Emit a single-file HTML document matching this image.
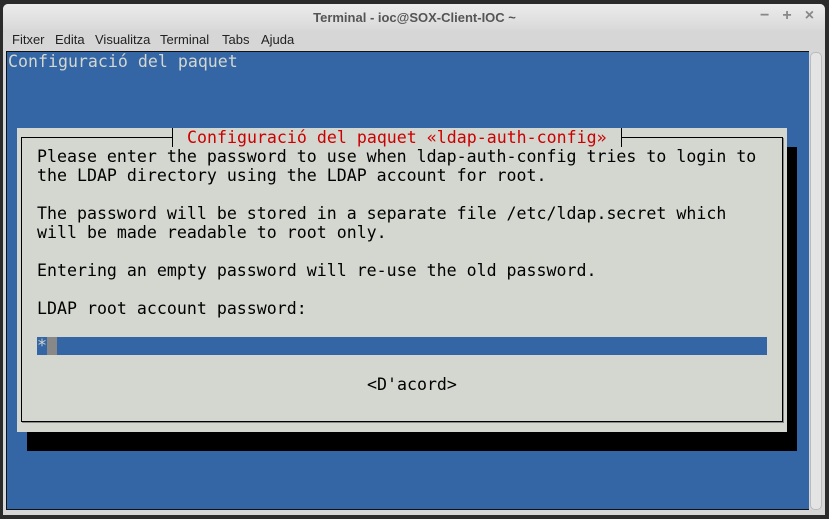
<!DOCTYPE html>
<html><head><meta charset="utf-8"><style>
body{margin:0;width:829px;height:519px;background:#2b2b2b;position:relative;overflow:hidden;font-family:"Liberation Sans",sans-serif}
.a{position:absolute}
.m{position:absolute;top:32px;font-size:13px;color:#222}
.t{position:absolute;font-family:"DejaVu Sans Mono","Liberation Mono",monospace;font-size:16.6px;line-height:19px;white-space:pre;color:#000}
</style></head><body>
<div class="a" style="left:3px;top:4px;width:822px;height:511px;background:#d6d6d6;border-radius:5px 5px 0 0"></div>
<div class="a" style="left:3px;top:4px;width:822px;height:26px;background:linear-gradient(#ececec,#d9d9d9);border-radius:5px 5px 0 0"></div>
<div class="a" style="left:0;top:10px;width:829px;text-align:center;font-size:13px;font-weight:bold;color:#555">Terminal - ioc@SOX-Client-IOC ~</div>
<div class="a" style="left:760px;top:7px;font-size:16px;color:#888;font-weight:bold;letter-spacing:13px">−+×</div>
<div class="m" style="left:12px">Fitxer</div>
<div class="m" style="left:55px">Edita</div>
<div class="m" style="left:95px">Visualitza</div>
<div class="m" style="left:160px">Terminal</div>
<div class="m" style="left:222px">Tabs</div>
<div class="m" style="left:261px">Ajuda</div>
<div class="a" style="left:6px;top:51px;width:802px;height:457px;background:#3465a4;border-top:1px solid #111;border-left:1px solid #111;border-bottom:1px solid #111"></div>
<div class="a" style="left:810px;top:52px;width:10px;height:456px;background:#e4e4e4;border:1px solid #bbb;border-radius:5px"></div>
<div class="t" style="left:8px;top:52px;color:#d3d7cf">Configuració del paquet</div>
<div class="a" style="left:27px;top:147px;width:770px;height:304px;background:#000"></div>
<div class="a" style="left:17px;top:128px;width:770px;height:304px;background:#d3d7cf"></div>
<div class="a" style="left:21px;top:137px;width:760px;height:283px;border:1px solid #000;box-shadow:1px 1px 0 #888"></div>
<div class="a" style="left:172px;top:128px;width:450px;height:18px;background:#d3d7cf"></div>
<div class="a" style="left:172px;top:128px;width:1px;height:19px;background:#000"></div>
<div class="a" style="left:621px;top:128px;width:1px;height:19px;background:#000"></div>
<div class="a" style="left:162px;top:137px;width:10px;height:1px;background:#000"></div>
<div class="a" style="left:622px;top:137px;width:10px;height:1px;background:#000"></div>
<div class="t" style="left:187px;top:128px;color:#cc0000">Configuració del paquet «ldap-auth-config»</div>
<div class="t" style="left:37px;top:147px">Please enter the password to use when ldap-auth-config tries to login to
the LDAP directory using the LDAP account for root.

The password will be stored in a separate file /etc/ldap.secret which
will be made readable to root only.

Entering an empty password will re-use the old password.

LDAP root account password:</div>
<div class="a" style="left:37px;top:337px;width:730px;height:18px;background:#3465a4"></div>
<div class="a" style="left:47px;top:337px;width:10px;height:18px;background:#888"></div>
<div class="t" style="left:37px;top:336px;color:#d3d7cf">*</div>
<div class="t" style="left:367px;top:375px">&lt;D'acord&gt;</div>
</body></html>
